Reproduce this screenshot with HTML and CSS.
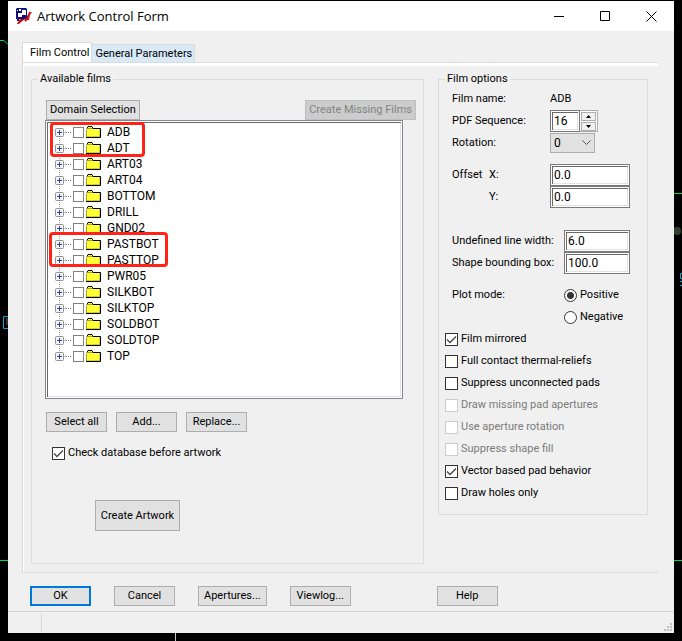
FILE: index.html
```html
<!DOCTYPE html>
<html lang="en">
<head>
<meta charset="utf-8">
<title>Artwork Control Form</title>
<link rel="stylesheet" href="styles.css">
</head>
<body>
<svg class="canvas canvas-left" width="8" height="641" viewBox="0 0 8 641" fill="none" aria-hidden="true">
  <path d="M0 40.500h4l4 4M0 560.500h8" stroke="#00d858"/>
  <path d="M8 316.500H3.500v12H8" stroke="#00a8d8"/>
  <path d="M6 318h2v7H6z" fill="#2c382c"/>
</svg>
<svg class="canvas canvas-right" width="8" height="641" viewBox="0 0 8 641" fill="none" aria-hidden="true">
  <path d="M0 193.500h8M0 560.500h8" stroke="#00d858"/>
  <circle cx="3" cy="231" r="4" fill="#34402f"/>
  <path d="M8 273.500H6.500v5H8M6 281.500h2M6 285.500h2" stroke="#00a8d8"/>
</svg>
<svg class="canvas canvas-bottom" width="1" height="8" viewBox="0 0 1 8" aria-hidden="true"><path d="M0 0h1v8H0z" fill="#c8c8c8"/></svg>

<main class="window">
  <header class="titlebar">
    <svg class="app-icon" width="16" height="16" viewBox="0 0 16 16" aria-hidden="true">
      <path d="M1 0h9l1 1v10H3v2H1v-2H0V1z" fill="#10107c"/>
      <path d="M1 2h1v1H1zM3 1h2v2H3zM6 2h4v5H6zM2 5h4v4H2z" fill="#fff"/>
      <path d="M13 4h3l-2 3-1 5h-2l-1 2-2-2-2 1-3 3H1l1-2 2-3h3l1 1 2-3 1 1z" fill="#e01010"/>
      <path d="M10 11l3-5M4 14l4-3" stroke="#801030" fill="none"/>
    </svg>
    <h1>Artwork Control Form</h1>
    <button class="caption" aria-label="Minimize"><svg width="11" height="11" viewBox="0 0 11 11"><path d="M0 5.500h10" stroke="#000"/></svg></button>
    <button class="caption" aria-label="Maximize"><svg width="11" height="11" viewBox="0 0 11 11"><path d="M.5.500h9v9h-9z" fill="none" stroke="#000"/></svg></button>
    <button class="caption" aria-label="Close"><svg width="11" height="11" viewBox="0 0 11 11"><path d="M.5.500l10 10M10.500.500l-10 10" stroke="#000"/></svg></button>
  </header>

  <div class="content">
    <div class="tabs" role="tablist">
      <button class="tab active" role="tab" aria-selected="true">Film Control</button>
      <button class="tab" role="tab" aria-selected="false">General Parameters</button>
    </div>
    <section class="panel">
      <fieldset class="group films">
        <legend>Available films</legend>
        <div class="row spread">
          <button class="btn">Domain Selection</button>
          <button class="btn" disabled>Create Missing Films</button>
        </div>
        <div class="tree">
          <ul id="films"></ul>
          <span class="mark mark-first"></span>
          <span class="mark mark-second"></span>
        </div>
        <div class="row actions">
          <button class="btn">Select all</button>
          <button class="btn">Add...</button>
          <button class="btn">Replace...</button>
        </div>
        <label class="check check-db"><input type="checkbox" checked>Check database before artwork</label>
        <button class="btn create">Create Artwork</button>
      </fieldset>

      <fieldset class="group options">
        <legend>Film options</legend>
        <div class="field"><span class="name">Film name:</span><span>ADB</span></div>
        <div class="field">
          <label class="name" for="seq">PDF Sequence:</label>
          <div class="spinner">
            <input class="text" id="seq" type="text" value="16">
            <div class="steps">
              <button aria-label="Increase"><svg width="5" height="3" viewBox="0 0 5 3"><path d="M0 3L2.500 0 5 3z"/></svg></button>
              <button aria-label="Decrease"><svg width="5" height="3" viewBox="0 0 5 3"><path d="M0 0l2.500 3L5 0z"/></svg></button>
            </div>
          </div>
        </div>
        <div class="field">
          <label class="name" for="rot">Rotation:</label>
          <div class="select">
            <select id="rot"><option>0</option></select>
            <svg width="9" height="6" viewBox="0 0 9 6" fill="none" aria-hidden="true"><path d="M.5.500l4 4 4-4" stroke="#555"/></svg>
          </div>
        </div>
        <div class="field gap-small"><label class="name offset" for="ox"><span>Offset</span><span>X:</span></label><input class="text" id="ox" type="text" value="0.0"></div>
        <div class="field"><label class="name offset" for="oy"><span></span><span>Y:</span></label><input class="text" id="oy" type="text" value="0.0"></div>
        <div class="field wide gap-large"><label class="name" for="lw">Undefined line width:</label><input class="text" id="lw" type="text" value="6.0"></div>
        <div class="field wide"><label class="name" for="bb">Shape bounding box:</label><input class="text" id="bb" type="text" value="100.0"></div>
        <div class="field wide gap-small"><span class="name">Plot mode:</span><label class="check"><input type="radio" name="plot" checked>Positive</label></div>
        <div class="field wide"><span class="name"></span><label class="check"><input type="radio" name="plot">Negative</label></div>
        <label class="check"><input type="checkbox" checked>Film mirrored</label>
        <label class="check"><input type="checkbox">Full contact thermal-reliefs</label>
        <label class="check"><input type="checkbox">Suppress unconnected pads</label>
        <label class="check off"><input type="checkbox" disabled>Draw missing pad apertures</label>
        <label class="check off"><input type="checkbox" disabled>Use aperture rotation</label>
        <label class="check off"><input type="checkbox" disabled>Suppress shape fill</label>
        <label class="check"><input type="checkbox" checked>Vector based pad behavior</label>
        <label class="check"><input type="checkbox">Draw holes only</label>
      </fieldset>
    </section>
  </div>

  <div class="footer">
    <button class="btn default">OK</button>
    <button class="btn">Cancel</button>
    <button class="btn">Apertures...</button>
    <button class="btn">Viewlog...</button>
    <button class="btn help">Help</button>
  </div>
  <div class="status">
    <svg width="8" height="8" viewBox="0 0 8 8" aria-hidden="true"><path d="M6 0h2v2H6zM3 3h2v2H3zM6 3h2v2H6zM0 6h2v2H0zM3 6h2v2H3zM6 6h2v2H6z" fill="#bfbfbf"/></svg>
  </div>
</main>

<template id="film-row">
  <li>
    <button class="expand" aria-label="Expand"><svg width="9" height="9" viewBox="0 0 9 9"><rect x=".5" y=".5" width="8" height="8" rx="1" fill="#f4f4f4" stroke="#919191"/><path d="M2 4.500h5M4.500 2v5" stroke="#2848a0"/></svg></button>
    <span class="dots"></span>
    <label><input type="checkbox"><svg width="15" height="12" viewBox="0 0 15 12"><path d="M.5 11V3.500l1-1h12.500V11z" fill="#ffff20" stroke="#a8a020"/><path d="M2 2V1h4v1z" fill="#ffff30"/><path d="M1 3.500h12M2 5.500h11M1 7.500h12M2 9.500h11" stroke="#fff" stroke-dasharray="1 1" opacity=".4"/><path d="M1 2.500l1-2h4l1 2h7.500v9H0" fill="none" stroke="#000"/></svg><span class="film-name"></span></label>
  </li>
</template>
<script src="films.js"></script>
</body>
</html>
```
FILE: styles.css
```css
* { box-sizing: border-box; }

body {
  position: relative;
  margin: 0;
  padding: 1px 8px 8px;
  min-height: 100vh;
  background: #000;
  color: #000;
  font: 11px/16px Roboto, "Liberation Sans", sans-serif;
}

button, input, select { font: inherit; color: inherit; margin: 0; }

.canvas { position: absolute; top: 0; }
.canvas-left { left: 0; }
.canvas-right { right: 0; }
.canvas-bottom { top: auto; bottom: 0; left: 175px; }

.window {
  display: flex;
  flex-direction: column;
  min-height: calc(100vh - 9px);
  background: #f0f0f0;
}

.titlebar {
  display: flex;
  align-items: center;
  height: 30px;
  padding-left: 8px;
  background: #fff;
}
.titlebar h1 {
  flex: 1;
  margin: 0 0 0 5px;
  font: 13px/18px "Open Sans", "Noto Sans", sans-serif;
}
.caption {
  display: flex;
  align-items: center;
  justify-content: center;
  width: 46px;
  height: 30px;
  padding: 0;
  border: 0;
  background: none;
}

.content {
  display: flex;
  flex: 1;
  flex-direction: column;
  padding: 11px 16px 0 14px;
}

.tabs { display: flex; align-items: flex-end; }
.tab {
  height: 18px;
  padding: 0 2px 0 3px;
  border: 1px solid #d9d9d9;
  border-bottom: 0;
  border-left: 0;
  background: #d8e9f8;
  white-space: nowrap;
}
.tab.active {
  height: 20px;
  padding: 0 2px 0 7px;
  border-left: 1px solid #d9d9d9;
  background: #fff;
}

.panel {
  display: flex;
  flex: 1;
  align-items: flex-start;
  gap: 14px;
  padding: 8px 10px 8px 8px;
  border: 1px solid #dcdcdc;
  border-right: 0;
  box-shadow: inset 1px 3px 0 #fff;
}

.group {
  min-width: 0;
  margin: 0;
  padding: 0;
  border: 1px solid #dcdcdc;
}
.group legend { padding: 0 2px; }
.films {
  flex: 1;
  align-self: stretch;
  padding: 13px 7px 0 14px;
}
.films legend { margin-left: -8px; }
.options { flex: 0 0 210px; padding: 1px 17px 10px 6px; }

.row { display: flex; }
.spread { justify-content: space-between; }

.btn {
  min-width: 61px;
  height: 20px;
  padding: 0 3px;
  border: 1px solid #adadad;
  background: #e1e1e1;
  white-space: nowrap;
}
.btn:disabled { border-color: #bfbfbf; background: #ccc; color: #838383; }
.btn.default { border: 2px solid #0078d7; }

.tree {
  position: relative;
  min-height: 279px;
  margin: 0 13px 0 -1px;
  padding: 3px;
  border: 1px solid #828790;
  background: #fff;
  box-shadow: inset 0 0 0 1px #fff, inset 2px 2px 0 #696969, inset -2px -2px 0 #e3e3e3;
}
.tree ul { margin: 0; padding: 0 0 0 6px; list-style: none; }
.tree li {
  display: flex;
  align-items: center;
  height: 16px;
  font-size: 12px;
  background: repeating-linear-gradient(#999 0 1px, transparent 1px 2px) 4px 0 / 1px 100% no-repeat;
}
.tree li:first-child, .tree li:last-child { background-size: 1px 50%; }
.tree li:first-child { background-position: 4px 100%; }
.expand { display: flex; padding: 0; border: 0; background: none; }
.dots { width: 6px; margin: 0 2px 0 1px; border-top: 1px dotted #888; }
.tree label { display: flex; align-items: center; }
.tree label svg { margin: 0 6px 0 2px; }

.mark {
  position: absolute;
  border: 3px solid #ff2418;
  border-radius: 4px;
  pointer-events: none;
}
.mark-first { top: 1px; left: 4px; width: 95px; height: 35px; }
.mark-second { top: 111px; left: 3px; width: 119px; height: 35px; }

.actions { gap: 9px; margin-top: 13px; }

.check { display: flex; align-items: center; gap: 3px; height: 22px; white-space: nowrap; }
.check.off { color: #7b7b7b; }
.check-db { margin: 10px 0 0 6px; }
.create { width: 85px; height: 31px; margin: 36px 0 0 49px; }

input[type="checkbox"], input[type="radio"] {
  appearance: none;
  flex: none;
  width: 13px;
  height: 13px;
  border: 1px solid #333;
  background: #fff;
}
.tree input[type="checkbox"] { width: 11px; height: 11px; border-color: #808080; }
input[type="checkbox"]:checked {
  background: #fff url("data:image/svg+xml,%3Csvg xmlns='http://www.w3.org/2000/svg' viewBox='0 0 11 11'%3E%3Cpath d='M1 5.500l3 3 6-6' fill='none' stroke='%23444' stroke-width='1.300'/%3E%3C/svg%3E");
}
input[type="checkbox"]:disabled { border-color: #ccc; }
input[type="radio"] { border-radius: 50%; }
input[type="radio"]:checked { background: radial-gradient(circle, #333 0 3px, #fff 4px); }

.field { display: flex; align-items: center; height: 22px; padding-left: 7px; }
.field .name { flex: none; width: 98px; white-space: nowrap; }
.field.wide .name { width: 112px; }
.field .offset { display: grid; grid-template-columns: 37px 1fr; }
.gap-small { margin-top: 10px; }
.gap-large { margin-top: 22px; }

.text {
  flex: 1;
  min-width: 0;
  height: 22px;
  padding: 0 3px;
  border: 1px solid #7a7a7a;
  background: #fff;
  font-size: 12px;
  box-shadow: inset 0 0 0 1px #fff, inset 2px 2px 0 #696969, inset -2px -2px 0 #e3e3e3;
}

.spinner {
  display: flex;
  align-items: center;
  width: 48px;
  height: 22px;
  border: 1px solid #abadb3;
  border-left: 0;
  background: #fff;
}
.steps { display: flex; flex-direction: column; gap: 1px; padding: 0 1px; }
.steps button {
  display: flex;
  align-items: center;
  justify-content: center;
  width: 15px;
  height: 9px;
  padding: 0;
  border: 1px solid #adadad;
  background: #f0f0f0;
}

.select { position: relative; width: 45px; }
.select select {
  display: block;
  appearance: none;
  width: 100%;
  height: 20px;
  padding: 0 3px;
  border: 1px solid #adadad;
  border-radius: 0;
  background: #e1e1e1;
  font-size: 12px;
}
.select svg { position: absolute; top: 7px; right: 4px; pointer-events: none; }

.footer { display: flex; gap: 23px; padding: 13px 22px 5px; }
.footer .btn { padding: 0 5px; }
.footer .help { margin-left: 63px; }

.status {
  display: flex;
  align-items: flex-end;
  justify-content: flex-end;
  height: 22px;
  padding: 2px;
  border-top: 1px solid #d7d7d7;
  background: linear-gradient(#d7d7d7, #d7d7d7) 33px 1px / 1px 19px no-repeat;
}
```
FILE: films.js
```js
const films = [
  "ADB", "ADT", "ART03", "ART04", "BOTTOM", "DRILL", "GND02", "PASTBOT",
  "PASTTOP", "PWR05", "SILKBOT", "SILKTOP", "SOLDBOT", "SOLDTOP", "TOP"
];
const list = document.getElementById("films");
const template = document.getElementById("film-row");
for (const film of films) {
  const row = template.content.cloneNode(true);
  row.querySelector(".film-name").textContent = film;
  list.append(row);
}
```
